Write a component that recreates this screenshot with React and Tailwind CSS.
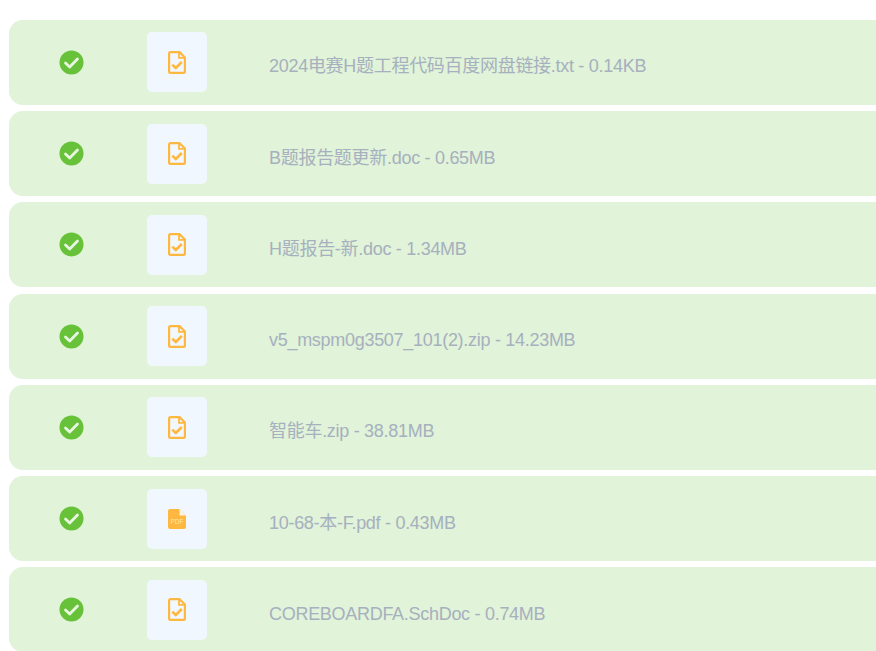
const files = [
  { name: "2024电赛H题工程代码百度网盘链接.txt - 0.14KB" },
  { name: "B题报告题更新.doc - 0.65MB" },
  { name: "H题报告-新.doc - 1.34MB" },
  { name: "v5_mspm0g3507_101(2).zip - 14.23MB" },
  { name: "智能车.zip - 38.81MB" },
  { name: "10-68-本-F.pdf - 0.43MB", pdf: true },
  { name: "COREBOARDFA.SchDoc - 0.74MB" },
];

function CheckIcon() {
  return (
    <svg width="25" height="25" viewBox="0 0 25 25">
      <circle cx="12.5" cy="12.5" r="12" fill="#67c23a" />
      <path d="M6.5 13 L10.7 17 L18.5 9" fill="none" stroke="#e8f5e0" strokeWidth="2.8" strokeLinecap="round" strokeLinejoin="round" />
    </svg>
  );
}

function DocIcon() {
  return (
    <svg width="18" height="23" viewBox="0 0 18 23">
      <path d="M2.5 1.1 H11.5 L16.9 6.5 V20.5 A1.4 1.4 0 0 1 15.5 21.9 H2.5 A1.4 1.4 0 0 1 1.1 20.5 V2.5 A1.4 1.4 0 0 1 2.5 1.1 Z" fill="none" stroke="#ffb83f" strokeWidth="2.2" strokeLinejoin="round" />
      <path d="M11 1.5 V6.8 H16.5" fill="none" stroke="#ffb83f" strokeWidth="1.8" />
      <path d="M4.3 13.6 L7.8 17 L13.8 11" fill="none" stroke="#ffb83f" strokeWidth="2.6" strokeLinejoin="round" />
    </svg>
  );
}

function PdfIcon() {
  return (
    <svg width="18" height="20" viewBox="0 0 18 20">
      <path d="M2 0 H11.5 L18 6.5 V18 A2 2 0 0 1 16 20 H2 A2 2 0 0 1 0 18 V2 A2 2 0 0 1 2 0 Z" fill="#ffb83f" />
      <path d="M11.5 0 V6.5 H18 Z" fill="#fdf3e2" />
      <text x="9" y="14.5" textAnchor="middle" fontSize="6.5" fontFamily="Liberation Sans, sans-serif" fill="#ffe3ad">PDF</text>
    </svg>
  );
}

export default function App() {
  return (
    <div className="w-[876px] h-[651px] overflow-hidden bg-white pt-[19.95px] pl-[9px] font-['Liberation_Sans','Noto_Sans_CJK_SC',sans-serif]">
      <div className="flex flex-col gap-[6.25px]">
        {files.map((f) => (
          <div key={f.name} className="flex h-[85px] w-full shrink-0 rounded-l-[14px] bg-[#e1f3d8] pt-[12.5px]">
            <div className="flex h-[60px] w-[125px] shrink-0 items-center justify-center">
              <CheckIcon />
            </div>
            <div className="ml-[13px] flex h-[60px] w-[60px] shrink-0 items-center justify-center rounded-[5px] bg-[#f0f7ff]">
              {f.pdf ? <PdfIcon /> : <DocIcon />}
            </div>
            <div className="ml-[62px] mt-[22px] text-[18px] leading-[24px] tracking-[-0.29px] whitespace-nowrap text-[#a6b0bf]">
              {f.name}
            </div>
          </div>
        ))}
      </div>
    </div>
  );
}
